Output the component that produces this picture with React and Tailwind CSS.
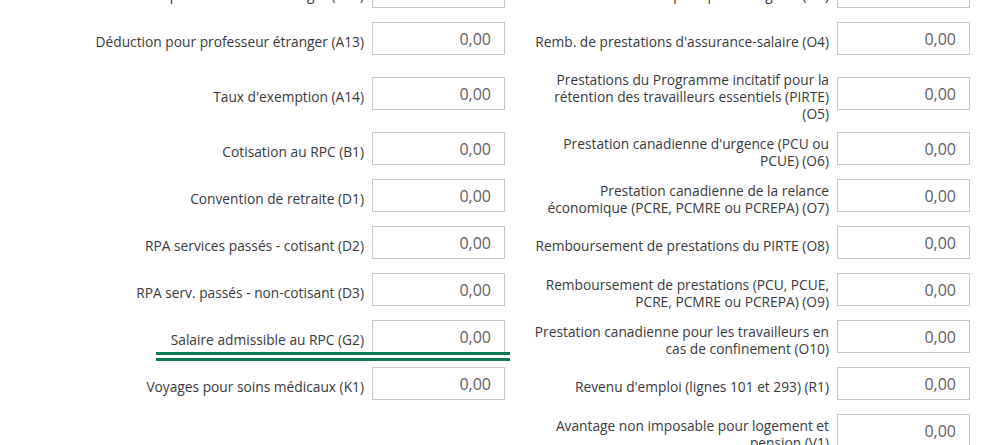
const rows = [
  { left: ["Déduction pour chercheur étranger (A12)"], right: ["Remboursement pour perte de gains (O3)"] },
  { left: ["Déduction pour professeur étranger (A13)"], right: ["Remb. de prestations d'assurance-salaire (O4)"] },
  {
    left: ["Taux d'exemption (A14)"],
    right: ['Prestations du Programme incitatif pour la', 'rétention des travailleurs essentiels (PIRTE)', '(O5)'],
  },
  { left: ['Cotisation au RPC (B1)'], right: ["Prestation canadienne d'urgence (PCU ou", 'PCUE) (O6)'] },
  {
    left: ['Convention de retraite (D1)'],
    right: ['Prestation canadienne de la relance', 'économique (PCRE, PCMRE ou PCREPA) (O7)'],
  },
  { left: ['RPA services passés - cotisant (D2)'], right: ['Remboursement de prestations du PIRTE (O8)'] },
  {
    left: ['RPA serv. passés - non-cotisant (D3)'],
    right: ['Remboursement de prestations (PCU, PCUE,', 'PCRE, PCMRE ou PCREPA) (O9)'],
  },
  {
    left: ['Salaire admissible au RPC (G2)'],
    right: ['Prestation canadienne pour les travailleurs en', 'cas de confinement (O10)'],
    marked: true,
  },
  { left: ['Voyages pour soins médicaux (K1)'], right: ["Revenu d'emploi (lignes 101 et 293) (R1)"] },
  { left: null, right: ['Avantage non imposable pour logement et', 'pension (V1)'] },
]

const Field = ({ lines, marked }) => {
  if (!lines) return <div />
  return (
    <div className="relative flex items-center justify-end gap-2">
      <div className="py-[2px] text-right text-[13.75px] leading-[17px] text-[#393a3d]">
        {lines.map((line) => (
          <div key={line} className="whitespace-nowrap">
            {line}
          </div>
        ))}
      </div>
      <div className="h-[39px] w-[133px] shrink-0">
        <div className="flex h-[33px] items-center justify-end border border-[#c6c6c6] bg-white pr-[13px] text-[16px] text-[#5f6064]">
          0,00
        </div>
      </div>
      {marked && (
        <div className="absolute left-[116px] top-[32px] w-[354px]">
          <div className="h-[3px] bg-[#0d7a54]" />
          <div className="mt-[3px] h-[3px] bg-[#0d7a54]" />
        </div>
      )}
    </div>
  )
}

export default function App() {
  return (
    <main className="h-[445px] overflow-hidden bg-white font-['Open_Sans',sans-serif]">
      <div className="mt-[-25px] grid grid-cols-[465px_465px] gap-y-[8px] pl-[40px]">
        {rows.map((row, i) => (
          <div key={i} className="contents">
            <Field lines={row.left} marked={row.marked} />
            <Field lines={row.right} />
          </div>
        ))}
      </div>
    </main>
  )
}
